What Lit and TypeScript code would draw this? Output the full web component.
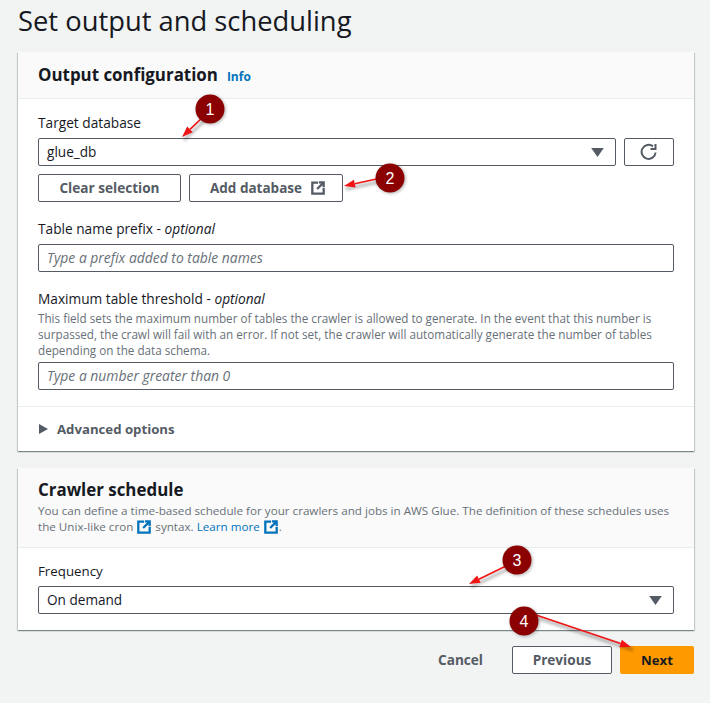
import { LitElement, html, css, svg } from "lit";
import { customElement } from "lit/decorators.js";

const ext = (cls: string) => html`<svg class=${cls} viewBox="0 0 16 16" fill="none" stroke="currentColor" stroke-width="2.6"><path d="M8 1.8H1.5v12.7h13V8"/><path d="M7 9.2 14 2.2M9 1.5h5.5V7"/></svg>`;
const caret = html`<svg class="caret" viewBox="0 0 14 10"><path d="M0 0h14L7 10z" fill="#545b64"/></svg>`;

const marker = (x: number, y: number, n: string, ax: number, ay: number, tx: number, ty: number) => {
  const dx = tx - ax, dy = ty - ay;
  const len = Math.hypot(dx, dy);
  const ux = dx / len, uy = dy / len;
  const bx = tx - ux * 11, by = ty - uy * 11;
  const px = -uy * 4, py = ux * 4;
  return svg`
    <line x1=${ax + 2} y1=${ay + 3} x2=${tx + 2} y2=${ty + 3} stroke="#000" stroke-opacity=".28" stroke-width="3" filter="url(#blur)"/>
    <line x1=${ax} y1=${ay} x2=${bx} y2=${by} stroke="#f01414" stroke-width="1.6"/>
    <polygon points="${tx},${ty} ${bx + px},${by + py} ${bx - px},${by - py}" fill="#f01414"/>
    <circle cx=${x + 1} cy=${y + 1} r="15" fill="#000" fill-opacity=".25" filter="url(#blur)"/>
    <circle cx=${x} cy=${y} r="14.5" fill="#8b0000"/>
    <text x=${x} y=${y + 6} text-anchor="middle" class="num">${n}</text>`;
};

@customElement("app-root")
export class AppRoot extends LitElement {
  static styles = css`
    :host { display: block; position: relative; width: 710px; height: 703px; overflow: hidden; background: #f2f3f3; color: #16191f; font-family: "Open Sans", sans-serif; font-size: 13.6px; line-height: 16px; }
    .page { padding: 0 16px 0 18px; display: flex; flex-direction: column; }
    h1 { margin: 0; font-weight: 400; font-size: 27.35px; line-height: 38px; height: 52px; padding-top: 2px; box-sizing: border-box; }
    .card { background: #fff; box-shadow: 0 1px 1px 0 rgba(0,28,36,.3), 1px 1px 1px 0 rgba(0,28,36,.15), -1px 1px 1px 0 rgba(0,28,36,.15); }
    .head { background: #fafafa; border-bottom: 1px solid #eaeded; padding: 0 20px; }
    .head.one { height: 46px; display: flex; align-items: center; gap: 9px; }
    h2 { margin: 0; font-size: 16.9px; font-weight: 700; line-height: 22px; }
    .info { color: #0073bb; font-weight: 700; font-size: 12px; padding-top: 3px; }
    .body { padding: 16px 20px; }
    .s2body { padding-top: 15px; }
    label { display: block; font-size: 13.7px; line-height: 16px; color: #16191f; }
    .freq { font-size: 13.3px; }
    em { font-style: italic; }
    .row { display: flex; gap: 8px; }
    .field { flex: 1; box-sizing: border-box; height: 28px; border: 1px solid #545b64; border-radius: 2px; background: #fff; padding: 0 8px; display: flex; align-items: center; justify-content: space-between; font-size: 13.6px; }
    .ph { color: #687078; font-style: italic; font-size: 13.9px; }
    .caret { width: 13px; height: 9px; margin-right: 3px; }
    .btn { box-sizing: border-box; height: 28px; border: 1px solid #545b64; border-radius: 2px; background: #fff; color: #545b64; font-weight: 700; font-size: 13.6px; display: flex; align-items: center; justify-content: center; gap: 9px; }
    .add { width: 154px; padding-left: 3px; font-size: 13.5px; }
    .desc { color: #687078; font-size: 11.7px; line-height: 16px; }
    .icon { width: 14px; height: 14px; }
    .inl { width: 14px; height: 14px; color: #0073bb; vertical-align: -3px; margin: 0 1px; }
    a { color: #0073bb; text-decoration: none; }
    .adv { border-top: 1px solid #eaeded; height: 44px; padding-left: 21px; display: flex; align-items: center; gap: 9px; color: #545b64; font-weight: 700; font-size: 13.2px; }
    .adv svg { width: 9px; height: 10px; }
    .foot { display: flex; justify-content: flex-end; align-items: center; margin-top: 16px; }
    .cancel { color: #545b64; font-weight: 700; font-size: 13.6px; margin-right: 29px; }
    .prev { width: 100px; margin-right: 8px; }
    .next { width: 74px; height: 28px; background: #ff9900; border-radius: 2px; color: #16191f; font-weight: 700; font-size: 13.2px; display: flex; align-items: center; justify-content: center; }
    .overlay { position: absolute; left: 0; top: 0; width: 710px; height: 703px; pointer-events: none; }
    .num { fill: #fff; font: 400 16px "Liberation Sans", sans-serif; }
    .s2head { padding-top: 11px; padding-bottom: 12px; }
    .s2head .desc { margin-top: 2px; font-size: 11.65px; }
  `;

  render() {
    return html`
      <div class="page">
        <h1>Set output and scheduling</h1>
        <section class="card">
          <div class="head one"><h2>Output configuration</h2><span class="info">Info</span></div>
          <div class="body">
            <label>Target database</label>
            <div class="row" style="margin-top:7px">
              <div class="field">glue_db${caret}</div>
              <div class="btn" style="width:50px">
                <svg width="18" height="18" viewBox="0 0 18 18" fill="none" stroke="#545b64" stroke-width="2"><path d="M15.6 9.5A7 7 0 1 1 13 3.4"/><path d="M15.5 1v5h-5" /></svg>
              </div>
            </div>
            <div class="row" style="margin-top:8px">
              <div class="btn" style="width:143px">Clear selection</div>
              <div class="btn add">Add database ${ext("icon")}</div>
            </div>
            <label style="margin-top:19px">Table name prefix - <em>optional</em></label>
            <div class="row" style="margin-top:7px"><div class="field ph">Type a prefix added to table names</div></div>
            <label style="margin-top:19px">Maximum table threshold - <em>optional</em></label>
            <div class="desc" style="margin-top:3px;margin-bottom:4px">This field sets the maximum number of tables the crawler is allowed to generate. In the event that this number is surpassed, the crawl will fail with an error. If not set, the crawler will automatically generate the number of tables depending on the data schema.</div>
            <div class="row"><div class="field ph">Type a number greater than 0</div></div>
          </div>
          <div class="adv"><svg viewBox="0 0 9 10"><path d="M0 0l9 5-9 5z" fill="#545b64"/></svg>Advanced options</div>
        </section>
        <section class="card" style="margin-top:17px">
          <div class="head s2head">
            <h2>Crawler schedule</h2>
            <div class="desc">You can define a time-based schedule for your crawlers and jobs in AWS Glue. The definition of these schedules uses the Unix-like cron ${ext("inl")} syntax. <a>Learn more</a> ${ext("inl")}.</div>
          </div>
          <div class="body s2body">
            <label class="freq">Frequency</label>
            <div class="row" style="margin-top:7px"><div class="field">On demand${caret}</div></div>
          </div>
        </section>
        <div class="foot">
          <span class="cancel">Cancel</span>
          <div class="btn prev">Previous</div>
          <div class="next">Next</div>
        </div>
      </div>
      <svg class="overlay" viewBox="0 0 710 703">
        <defs><filter id="blur" x="-30%" y="-30%" width="160%" height="160%"><feGaussianBlur stdDeviation="1.5"/></filter></defs>
        ${marker(210, 109, "1", 203, 117, 182, 137)}
        ${marker(390, 178, "2", 381, 178, 344, 186)}
        ${marker(517, 560, "3", 508, 565, 469, 584)}
        ${marker(524, 621, "4", 536, 615, 631, 647)}
      </svg>
    `;
  }
}
